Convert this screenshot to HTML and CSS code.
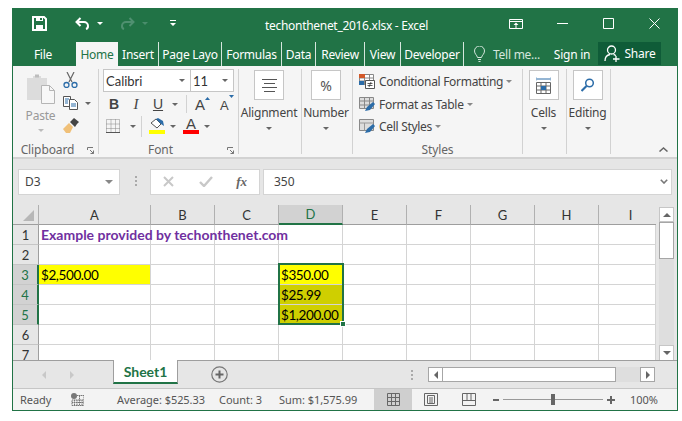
FILE: index.html
```html
<!DOCTYPE html>
<html lang="en">
<head>
  <meta charset="UTF-8">
  <title>techonthenet_2016.xlsx - Excel</title>
  <link rel="stylesheet" href="styles.css">
</head>
<body>
<div class="window">

  <!-- Title bar -->
  <header class="titlebar">
    <svg class="qa-save" width="15" height="15" viewBox="0 0 15 15"><path d="M1 1h11l2 2v11H1z" fill="none" stroke="#fff" stroke-width="2"/><path d="M4 1h7v4H4zM4 9h7v5H4z" fill="#fff"/><path d="M8 2h2v2H8z" fill="#217346"/></svg>
    <svg class="qa-undo" width="15" height="13" viewBox="0 0 15 13"><path d="M5.500 1 1.500 5l4 4M2 5h7a4 4 0 0 1 4 4 3 3 0 0 1-2 3" fill="none" stroke="#fff" stroke-width="2"/></svg>
    <span class="caret caret-white qa-c1"></span>
    <svg class="qa-redo" width="15" height="13" viewBox="0 0 15 13"><path d="M9.500 1l4 4-4 4M13 5H6a4 4 0 0 0-4 4 3 3 0 0 0 2 3" fill="none" stroke="#4f9070" stroke-width="2"/></svg>
    <span class="caret caret-dim qa-c2"></span>
    <svg class="qa-custom" width="6" height="7" viewBox="0 0 6 7"><path d="M0 0h6v1H0zM0 3h6L3 6z" fill="#fff"/></svg>
    <span class="doc-title">techonthenet_2016.xlsx - Excel</span>
    <svg class="win-display" width="14" height="11" viewBox="0 0 14 11"><path d="M.5 1.500h13v9H.5zM.5 3.500h13" fill="none" stroke="#fff"/><path d="M7 4.500 4.500 7h2v3h1V7h2z" fill="#fff"/></svg>
    <svg class="win-min" width="11" height="1" viewBox="0 0 11 1"><path d="M0 0h11v1H0z" fill="#fff"/></svg>
    <svg class="win-max" width="11" height="11" viewBox="0 0 11 11"><path d="M.5.500h10v10H.5z" fill="none" stroke="#fff"/></svg>
    <svg class="win-close" width="11" height="11" viewBox="0 0 11 11"><path d="M.5.500l10 10M10.500.500l-10 10" fill="none" stroke="#fff"/></svg>
  </header>

  <!-- Tabs -->
  <nav class="tabs">
    <span class="tab tab-file">File</span>
    <span class="tab tab-active">Home</span>
    <span class="tab tab-sep">Insert</span>
    <span class="tab tab-sep">Page Layo</span>
    <span class="tab tab-sep">Formulas</span>
    <span class="tab tab-sep">Data</span>
    <span class="tab tab-sep">Review</span>
    <span class="tab tab-sep">View</span>
    <span class="tab tab-sep">Developer</span>
    <span class="tab tab-tell"><svg width="11" height="16" viewBox="0 0 11 16"><path d="M3.500 11.500C3 9 .5 8 .5 5a5 5 0 0 1 10 0c0 3-2.500 4-3 6.500zM4 13.500h3M4.500 15.500h2" fill="none" stroke="#d5e6dd"/></svg>Tell me...</span>
    <span class="tab">Sign in</span>
    <span class="tab tab-share"><svg width="17" height="17" viewBox="0 0 17 17"><circle cx="7.500" cy="5" r="4" fill="none" stroke="#fff" stroke-width="1.300"/><path d="M1 16c0-4 2-6 5-6.500M9.500 9.500c1 .2 1.700.6 2.300 1.200M12 11v6M9 14h6.500" fill="none" stroke="#fff" stroke-width="1.300"/></svg>Share</span>
  </nav>

  <!-- Ribbon -->
  <section class="ribbon">
    <div class="group group-clipboard">
      <div class="group-body clip-body">
        <div class="paste">
          <svg width="29" height="30" viewBox="0 0 29 30"><path d="M1 4h6V2h8v2h6v22H1z" fill="#dcdcdc"/><path d="M9 .500h4v3H9z" fill="#bdbdbd"/><path d="M15.500 11.500h8l5 5v13h-13z" fill="#f7f7f7" stroke="#b5b5b5"/><path d="M23.500 11.500v5h5" fill="none" stroke="#b5b5b5"/></svg>
          <span class="paste-label">Paste</span>
          <span class="caret caret-pale"></span>
        </div>
        <div class="clip-tools">
          <svg width="15" height="16" viewBox="0 0 15 16"><path d="M4 0l5 10M11 0 6 10" fill="none" stroke="#666" stroke-width="1.200"/><circle cx="3.500" cy="13" r="2.500" fill="none" stroke="#2b6ca8" stroke-width="1.300"/><circle cx="11.500" cy="13" r="2.500" fill="none" stroke="#2b6ca8" stroke-width="1.300"/></svg>
          <div class="tool-row">
            <svg width="16" height="14" viewBox="0 0 16 14"><path d="M.500.500h7v10h-7z" fill="#fff" stroke="#555"/><path d="M6.500 3.500h5l3 3v7h-8z" fill="#fff" stroke="#555"/><path d="M2 3h4M2 5h3M2 7h3M8 8h5M8 10h5" stroke="#2b6ca8"/></svg>
            <span class="caret"></span>
          </div>
          <svg width="16" height="15" viewBox="0 0 16 15"><path d="M0 11 6 5l4 4-3 6H3z" fill="#f0c078"/><path d="M7 4l3-3 1-1 5 4-2 2-2 3z" fill="#444"/></svg>
        </div>
      </div>
      <div class="group-foot foot-left">Clipboard<svg class="launcher" width="7" height="7" viewBox="0 0 7 7"><path d="M.500 3V.500H6M3 3l3.500 3.500M6.500 3.500v3h-3" fill="none" stroke="#777"/></svg></div>
    </div>

    <div class="group group-font">
      <div class="group-body font-body">
        <div class="font-boxes">
          <span class="font-name">Calibri<span class="caret"></span></span>
          <span class="font-size">11<span class="caret"></span></span>
        </div>
        <div class="font-row row-style">
          <b class="btn btn-b">B</b>
          <i class="btn btn-i">I</i>
          <u class="btn btn-u">U</u>
          <span class="caret"></span>
          <span class="vsep vsep-a"></span>
          <span class="grow">A<svg width="5" height="3" viewBox="0 0 5 3"><path d="M0 3 2.500 0 5 3z" fill="#2b6ca8"/></svg></span>
          <span class="grow grow-small">A<svg width="5" height="3" viewBox="0 0 5 3"><path d="M0 0h5L2.500 3z" fill="#2b6ca8"/></svg></span>
        </div>
        <div class="font-row row-fill">
          <svg width="14" height="14" viewBox="0 0 14 14"><path d="M.500.500h13v13H.500zM.500 5h13M.500 9.500h13M5 .500v13M9.500.500v13" fill="none" stroke="#888" stroke-dasharray="1 1"/><path d="M0 13.500h14" stroke="#555"/></svg>
          <span class="caret caret-gap"></span>
          <span class="vsep vsep-b"></span>
          <span class="swatch-btn">
            <svg width="16" height="11" viewBox="0 0 16 11"><path d="M2 5l5-4 5 5-4 4z" fill="#fff" stroke="#555"/><path d="M7 1 9 0l5 3 1 5-3-2z" fill="#2b6ca8"/></svg>
            <span class="swatch swatch-yellow"></span>
          </span>
          <span class="caret"></span>
          <span class="swatch-btn swatch-btn-a">
            <span class="font-a">A</span>
            <span class="swatch swatch-red"></span>
          </span>
          <span class="caret"></span>
        </div>
      </div>
      <div class="group-foot foot-left">Font<svg class="launcher" width="7" height="7" viewBox="0 0 7 7"><path d="M.500 3V.500H6M3 3l3.500 3.500M6.500 3.500v3h-3" fill="none" stroke="#777"/></svg></div>
    </div>

    <div class="group group-align">
      <div class="big">
        <span class="big-box"><svg width="15" height="13" viewBox="0 0 15 13"><path d="M0 .500h15M2 4.500h11M0 8.500h15M2 12.500h11" stroke="#555"/></svg></span>
        <span class="big-label">Alignment</span>
        <span class="caret"></span>
      </div>
    </div>

    <div class="group group-number">
      <div class="big">
        <span class="big-box big-pct">%</span>
        <span class="big-label">Number</span>
        <span class="caret"></span>
      </div>
    </div>

    <div class="group group-styles">
      <div class="group-body styles-body">
        <div class="style-row">
          <svg width="16" height="15" viewBox="0 0 16 15"><path d="M.500.500h14v10H.500zM5.500.500v10M10.500.500v10M.500 4h14M.500 7h14" fill="#fff" stroke="#888"/><path d="M0 0h6v4H0z" fill="#d2592a"/><path d="M0 7h5v4H0z" fill="#2b6ca8"/><path d="M6.500 6.500h9v8h-9z" fill="#fff" stroke="#555"/><path d="M8.500 9.500h5M8.500 11.500h5M10 13l2-5" stroke="#333" stroke-width=".8"/></svg>
          Conditional Formatting<span class="caret"></span>
        </div>
        <div class="style-row">
          <svg width="16" height="15" viewBox="0 0 16 15"><path d="M.500.500h14v11H.500zM5.500.500v11M10.500.500v11M.500 4h14M.500 8h14" fill="#ddd" stroke="#888"/><path d="M6 14l2-4 6-5 2 2-5 6z" fill="#2b6ca8"/></svg>
          Format as Table<span class="caret"></span>
        </div>
        <div class="style-row">
          <svg width="16" height="15" viewBox="0 0 16 15"><path d="M.500.500h14v11H.500z" fill="#ddd" stroke="#888"/><path d="M.500 4h14M5.500 4v7.500" stroke="#999"/><path d="M6 14l2-4 6-5 2 2-5 6z" fill="#2b6ca8"/></svg>
          Cell Styles<span class="caret"></span>
        </div>
      </div>
      <div class="group-foot">Styles</div>
    </div>

    <div class="group group-cells">
      <div class="big">
        <span class="big-box"><svg width="15" height="17" viewBox="0 0 15 17"><path d="M0 .500v3M15 .500v3M1 2h13" stroke="#2b6ca8"/><path d="M.500 5.500h14v11H.500zM.500 9h14M.500 13h14M5 5.500v11M10 5.500v11" fill="#fff" stroke="#666"/><path d="M5 9h5v4H5z" fill="#2b6ca8"/></svg></span>
        <span class="big-label">Cells</span>
        <span class="caret"></span>
      </div>
    </div>

    <div class="group group-editing">
      <div class="big">
        <span class="big-box"><svg width="14" height="14" viewBox="0 0 14 14"><circle cx="8.500" cy="5" r="3.800" fill="none" stroke="#2b6ca8" stroke-width="1.500"/><path d="M5.500 8 .5 13" stroke="#2b6ca8" stroke-width="2.200"/></svg></span>
        <span class="big-label">Editing</span>
        <span class="caret"></span>
      </div>
    </div>

    <svg class="collapse" width="9" height="5" viewBox="0 0 9 5"><path d="M.500 4.500l4-3.500 4 3.500" fill="none" stroke="#666" stroke-width="1.500"/></svg>
  </section>

  <!-- Formula bar -->
  <section class="formula">
    <span class="namebox">D3<span class="caret caret-big"></span></span>
    <span class="grip"></span>
    <span class="fx-box">
      <svg width="12" height="11" viewBox="0 0 12 11"><path d="M1 1l9 9M10 1l-9 9" stroke="#c8c8c8" stroke-width="2"/></svg>
      <svg width="14" height="11" viewBox="0 0 14 11"><path d="M1 6l4 4 8-9" fill="none" stroke="#c8c8c8" stroke-width="2.400"/></svg>
      <i class="fx">fx</i>
    </span>
    <span class="formula-input">350<svg width="8" height="5" viewBox="0 0 8 5"><path d="M.800.800 4 4 7.200.800" fill="none" stroke="#777" stroke-width="1.600"/></svg></span>
  </section>

  <!-- Sheet -->
  <section class="sheet">
    <div class="grid-wrap">
      <table class="grid">
        <thead>
          <tr><th class="corner"><span class="corner-mark"></span></th><th>A</th><th>B</th><th>C</th><th class="hdr-sel">D</th><th>E</th><th>F</th><th>G</th><th>H</th><th class="col-last">I</th></tr>
        </thead>
        <tbody>
          <tr><th>1</th><td class="note">Example provided by techonthenet.com</td><td></td><td></td><td></td><td></td><td></td><td></td><td></td><td></td></tr>
          <tr><th>2</th><td></td><td></td><td></td><td></td><td></td><td></td><td></td><td></td><td></td></tr>
          <tr><th class="row-sel">3</th><td class="yellow">$2,500.00</td><td></td><td></td><td class="yellow">$350.00</td><td></td><td></td><td></td><td></td><td></td></tr>
          <tr><th class="row-sel">4</th><td></td><td></td><td></td><td class="tinted">$25.99</td><td></td><td></td><td></td><td></td><td></td></tr>
          <tr><th class="row-sel">5</th><td></td><td></td><td></td><td class="tinted">$1,200.00</td><td></td><td></td><td></td><td></td><td></td></tr>
          <tr><th>6</th><td></td><td></td><td></td><td></td><td></td><td></td><td></td><td></td><td></td></tr>
          <tr><th>7</th><td></td><td></td><td></td><td></td><td></td><td></td><td></td><td></td><td></td></tr>
        </tbody>
      </table>
      <div class="selection"><span class="handle"></span></div>
    </div>
    <div class="vscroll">
      <span class="sb-btn"><span class="tri tri-up"></span></span>
      <span class="sb-thumb"></span>
      <span class="sb-btn sb-down"><span class="tri tri-down"></span></span>
    </div>
  </section>

  <!-- Sheet tabs -->
  <section class="sheetbar">
    <span class="tri tri-left tri-pale nav-prev"></span>
    <span class="tri tri-right tri-pale nav-next"></span>
    <span class="sheet-tab">Sheet1</span>
    <svg class="add-sheet" width="17" height="17" viewBox="0 0 17 17"><circle cx="8.500" cy="8.500" r="7.700" fill="none" stroke="#777" stroke-width="1.200"/><path d="M8.500 4.500v8M4.500 8.500h8" stroke="#666" stroke-width="2"/></svg>
    <span class="grip grip-bar"></span>
    <div class="hscroll">
      <span class="hs-btn"><span class="tri tri-left"></span></span>
      <span class="hs-thumb"></span>
      <span class="hs-btn hs-end"><span class="tri tri-right"></span></span>
    </div>
  </section>

  <!-- Status bar -->
  <footer class="status">
    <span class="st-ready">Ready</span>
    <svg class="st-macro" width="13" height="13" viewBox="0 0 13 13"><circle cx="3" cy="3" r="3" fill="#777"/><path d="M6 2.500h7v10H1V7h12M1 9.500h12M3.500 7v5.500M6 7v5.500M8.500 2.500v10M11 7v5.500" fill="none" stroke="#777" stroke-dasharray="1.500 .5"/></svg>
    <span class="st-avg">Average: $525.33</span>
    <span class="st-count">Count: 3</span>
    <span class="st-sum">Sum: $1,575.99</span>
    <span class="view view-on"><svg width="13" height="13" viewBox="0 0 13 13"><path d="M.500.500h12v12H.500zM.500 4.500h12M.500 8.500h12M4.500.500v12M8.500.500v12" fill="none" stroke="#666"/></svg></span>
    <span class="view"><svg width="14" height="13" viewBox="0 0 14 13"><path d="M.500.500h13v12H.500z" fill="none" stroke="#666"/><path d="M3.500 2.500h7v8h-7z" fill="none" stroke="#666"/><path d="M5 5h4M5 7h4M5 9h4" stroke="#666"/></svg></span>
    <span class="view"><svg width="14" height="13" viewBox="0 0 14 13"><path d="M.500.500h13v12H.500zM.500 7.500h13M5 .500v7M9 .500v7" fill="none" stroke="#666"/></svg></span>
    <span class="zoom-minus"></span>
    <span class="slider"><span class="slider-thumb"></span></span>
    <span class="zoom-plus"></span>
    <span class="st-zoom">100%</span>
  </footer>
</div>
</body>
</html>
```

FILE: styles.css
```css
* {
  box-sizing: border-box;
}
body {
  margin: 0;
  padding: 8px 4px 0 12px;
  background: #fff;
  font-family: "Noto Sans", sans-serif;
  font-size: 12px;
  color: #444;
}
svg {
  display: block;
  flex: none;
}
.window {
  position: relative;
  width: 666px;
  height: 403px;
  border: 1px solid #217346;
  border-top: 0;
  background: #e6e6e6;
  overflow: hidden;
}

/* carets */
.caret {
  display: inline-block;
  flex: none;
  width: 0;
  height: 0;
  border-left: 3px solid transparent;
  border-right: 3px solid transparent;
  border-top: 3px solid #666;
}
.caret-white { border-top-color: #fff; }
.caret-dim { border-top-color: #4f9070; }
.caret-pale { border-top-color: #bbb; }
.caret-big {
  border-left-width: 4px;
  border-right-width: 4px;
  border-top-width: 4px;
  border-top-color: #888;
}

/* title bar */
.titlebar {
  display: flex;
  align-items: center;
  height: 34px;
  margin: 0 -1px;
  padding: 0 0 4px 20px;
  background: #217346;
  color: #fff;
}
.qa-undo { margin-left: 28px; }
.qa-c1 { margin-left: 7px; }
.qa-redo { margin-left: 17px; }
.qa-c2 { margin-left: 7px; opacity: .9; }
.qa-custom { margin-left: 22px; }
.doc-title {
  width: 150px;
  margin: 5px 0 0 89px;
  font-size: 12px;
  letter-spacing: -.3px;
  white-space: nowrap;
}
.win-display { margin-left: 94px; }
.win-min { margin-left: 34px; }
.win-max { margin-left: 35px; }
.win-close { margin-left: 35px; }

/* tabs */
.tabs {
  display: grid;
  grid-template-columns: 64px 42px 41px 63px 60px 34px 49px 36px 63px 82px 52px 63px;
  height: 24px;
  margin: 0 -1px;
  padding-left: 0;
  background: #217346;
  color: #fff;
}
.tab {
  display: flex;
  align-items: center;
  justify-content: center;
  font-size: 12px;
  letter-spacing: -.25px;
  white-space: nowrap;
}
.tab-file {
  padding-right: 2px;
}
.tab-active {
  background: #f5f5f5;
  color: #217346;
}
.tab-sep {
  border-right: 1px solid #d5e6dd;
}
.tab-tell {
  gap: 8px;
  padding-left: 4px;
  color: #d5e6dd;
}
.tab-share {
  gap: 4px;
  height: 23px;
  background: #0f5c38;
}

/* ribbon */
.ribbon {
  position: relative;
  display: flex;
  height: 93px;
  padding-top: 3px;
  background: #f5f5f5;
  border-bottom: 2px solid #d2d2d2;
}
.group {
  position: relative;
  display: flex;
  flex-direction: column;
  height: 85px;
  border-right: 1px solid #d2d2d2;
}
.group-clipboard { width: 86px; }
.group-font { width: 140px; }
.group-align { width: 63px; }
.group-number { width: 51px; }
.group-styles { width: 170px; }
.group-cells { width: 44px; }
.group-editing { width: 44px; }
.group-body {
  height: 69px;
}
.group-foot {
  display: flex;
  justify-content: center;
  height: 16px;
  font-size: 12px;
  line-height: 24px;
  letter-spacing: -.1px;
  color: #666;
}
.foot-left {
  padding-right: 16px;
}
.launcher {
  position: absolute;
  right: 4px;
  bottom: 0;
}

/* clipboard */
.clip-body {
  display: flex;
  padding: 5px 0 0 13px;
}
.paste {
  display: flex;
  flex-direction: column;
  align-items: center;
  width: 29px;
}
.paste-label {
  margin-top: 4px;
  line-height: 16px;
  letter-spacing: -.2px;
  color: #999;
}
.paste .caret {
  margin-top: 5px;
}
.clip-tools {
  display: flex;
  flex-direction: column;
  gap: 8px;
  margin-left: 8px;
  margin-top: -2px;
}
.tool-row {
  display: flex;
  align-items: center;
  gap: 6px;
}

/* font */
.font-body {
  padding-left: 4px;
}
.font-boxes {
  display: flex;
  height: 23px;
  font-family: Lato, sans-serif;
  font-size: 13px;
  color: #333;
}
.font-name,
.font-size {
  display: flex;
  align-items: center;
  justify-content: space-between;
  height: 23px;
  padding: 0 5px 0 2px;
  background: #fff;
  border: 1px solid #c6c6c6;
}
.font-name { width: 88px; }
.font-size { width: 43px; margin-left: 0; border-left: 0; }
.font-row {
  display: flex;
  align-items: center;
}
.row-style {
  height: 18px;
  margin-top: 3px;
}
.btn {
  display: flex;
  justify-content: center;
  width: 22px;
  font-family: "Liberation Sans", sans-serif;
  font-size: 14px;
  color: #444;
}
.row-style .caret { margin-left: 3px; }
.btn-i { font-family: "Liberation Serif", serif; font-size: 15px; }
.vsep {
  width: 1px;
  background: #d2d2d2;
  flex: none;
}
.vsep-a { height: 18px; margin-left: 8px; }
.grow {
  display: flex;
  align-items: flex-start;
  margin-left: 8px;
  font-family: "Liberation Sans", sans-serif;
  font-size: 15px;
  line-height: 17px;
}
.grow-small {
  margin-left: 10px;
  font-size: 13px;
  padding-top: 2px;
}
.grow svg { margin-top: 1px; }
.grow-small svg { margin-top: -2px; }
.row-fill {
  height: 20px;
  margin-top: 3px;
  padding-left: 3px;
}
.caret-gap { margin-left: 10px; }
.vsep-b { height: 21px; margin: 0 0 0 5px; }
.swatch-btn {
  display: flex;
  flex-direction: column;
  width: 16px;
  margin: 0 5px 0 7px;
}
.swatch-btn-a { margin-left: 7px; }
.swatch {
  height: 4px;
  margin-top: 1px;
}
.swatch-yellow { background: #ff0; }
.swatch-red { background: #f00; }
.font-a {
  font-family: "Liberation Sans", sans-serif;
  font-size: 15px;
  line-height: 11px;
  text-align: center;
}

/* big buttons */
.big {
  display: flex;
  flex-direction: column;
  align-items: center;
  padding: 1px 2px 0 0;
}
.big-box {
  display: flex;
  align-items: center;
  justify-content: center;
  width: 30px;
  height: 30px;
  background: #fff;
  border: 1px solid #c6c6c6;
}
.big-pct {
  font-size: 14px;
  color: #555;
}
.big-label {
  margin-top: 4px;
  line-height: 18px;
  letter-spacing: -.2px;
  white-space: nowrap;
}
.big .caret {
  margin-top: 5px;
}

/* styles */
.styles-body {
  display: flex;
  flex-direction: column;
  padding: 1px 0 0 6px;
}
.style-row {
  display: flex;
  align-items: center;
  gap: 4px;
  height: 23px;
  white-space: nowrap;
  letter-spacing: -.3px;
}
.style-row .caret {
  margin-left: -1px;
  border-top-color: #888;
}

.collapse {
  position: absolute;
  right: 9px;
  bottom: 5px;
}

/* formula bar */
.formula {
  display: flex;
  align-items: center;
  height: 46px;
  padding: 0 5px 1px 5px;
  background: #e6e6e6;
  font-size: 12px;
}
.namebox,
.fx-box,
.formula-input {
  display: flex;
  align-items: center;
  height: 26px;
  background: #fff;
  border: 1px solid #d4d4d4;
}
.namebox {
  justify-content: space-between;
  width: 102px;
  padding: 0 6px;
}
.grip {
  display: block;
  width: 2px;
  height: 11px;
  margin: 0 13px 0 15px;
  background: repeating-linear-gradient(#aaa 0 2px, transparent 2px 4px);
}
.fx-box {
  justify-content: space-between;
  width: 110px;
  padding: 0 12px;
  margin-right: 3px;
}
.fx {
  font-family: "Liberation Serif", serif;
  font-size: 13px;
  font-weight: bold;
  color: #666;
}
.formula-input {
  justify-content: space-between;
  flex: 1;
  padding: 0 3px 0 10px;
}

/* sheet */
.sheet {
  display: flex;
  height: 155px;
  background: #e6e6e6;
}
.grid-wrap {
  position: relative;
  width: 643px;
  height: 155px;
  overflow: hidden;
  background: #fff;
}
.grid {
  table-layout: fixed;
  width: 643px;
  border-collapse: separate;
  border-spacing: 0;
}
.grid th,
.grid td {
  height: 20px;
  padding: 0;
  font-weight: normal;
  overflow: visible;
  white-space: nowrap;
}
.grid thead th {
  width: 64px;
  height: 20px;
  background: #e6e6e6;
  border-right: 1px solid #b0b0b0;
  border-bottom: 1px solid #9e9e9e;
  font-family: Lato, sans-serif;
  font-size: 13px;
  color: #333;
}
.grid thead th:nth-child(2) { width: 112px; }
.grid thead th.corner {
  position: relative;
  width: 26px;
}
.grid thead th.col-last {
  width: 57px;
  padding-left: 6px;
  border-right: 0;
}
.corner-mark {
  position: absolute;
  right: 4px;
  bottom: 3px;
  border-left: 11px solid transparent;
  border-bottom: 11px solid #b7b7b7;
}
.grid thead th.hdr-sel {
  background: #d2d2d2;
  border-bottom: 2px solid #217346;
  color: #217346;
}
.grid tbody th {
  background: #e6e6e6;
  border-right: 1px solid #9e9e9e;
  border-bottom: 1px solid #c6c6c6;
  font-family: Lato, sans-serif;
  font-size: 13px;
  color: #333;
}
.grid tbody th.row-sel {
  background: #d2d2d2;
  border-right: 2px solid #217346;
  color: #217346;
}
.grid td {
  border-right: 1px solid #d4d4d4;
  border-bottom: 1px solid #d4d4d4;
  padding-left: 2px;
  font-family: Lato, sans-serif;
  font-size: 13.500px;
  letter-spacing: -.4px;
  color: #000;
}
.grid td.note {
  color: #7030a0;
  font-size: 14px;
  font-weight: bold;
  letter-spacing: 0;
}
.yellow {
  background: #ff0;
}
.tinted {
  background: #cfcf00;
}
.selection {
  position: absolute;
  left: 265px;
  top: 58px;
  width: 66px;
  height: 62px;
  border: 2px solid #217346;
}
.handle {
  position: absolute;
  right: -4px;
  bottom: -4px;
  width: 6px;
  height: 6px;
  background: #217346;
  border: 1px solid #fff;
}

/* vertical scrollbar */
.vscroll {
  display: flex;
  flex-direction: column;
  width: 15px;
  margin: 2px 0 0 3px;
  background: #dedede;
}
.sb-btn {
  display: flex;
  align-items: center;
  justify-content: center;
  height: 15px;
  background: #fff;
  border: 1px solid #c6c6c6;
}
.sb-down {
  margin-top: auto;
  border-bottom: 0;
}
.sb-thumb {
  height: 37px;
  background: #fff;
  border: 1px solid #a6a6a6;
}
.tri {
  display: block;
  width: 0;
  height: 0;
  border: 4px solid transparent;
}
.tri-up { border-top: 0; border-bottom-color: #666; }
.tri-down { border-bottom: 0; border-top-color: #666; }
.tri-left { border-left: 0; border-right-color: #666; }
.tri-right { border-right: 0; border-left-color: #666; }
.tri-pale.tri-left { border-right-color: #c8c8c8; }
.tri-pale.tri-right { border-left-color: #c8c8c8; }

/* sheet tabs */
.sheetbar {
  display: flex;
  align-items: flex-start;
  height: 28px;
  background: #e6e6e6;
  border-top: 1px solid #9e9e9e;
}
.nav-prev { margin: 10px 0 0 29px; }
.nav-next { margin: 10px 0 0 24px; }
.sheet-tab {
  width: 65px;
  height: 24px;
  margin: -1px 0 0 39px;
  background: #fff;
  border-left: 1px solid #9e9e9e;
  border-right: 1px solid #9e9e9e;
  border-bottom: 2px solid #217346;
  font-family: Lato, sans-serif;
  font-size: 14px;
  font-weight: bold;
  line-height: 24px;
  text-align: center;
  color: #217346;
}
.add-sheet {
  margin: 5px 0 0 33px;
}
.grip-bar {
  margin: 9px 15px 0 183px;
}
.hscroll {
  display: flex;
  width: 227px;
  height: 15px;
  margin: 6px 0 0 0;
  background: #dedede;
}
.hs-btn {
  display: flex;
  align-items: center;
  justify-content: center;
  width: 15px;
  background: #fff;
  border: 1px solid #a6a6a6;
}
.hs-thumb {
  width: 173px;
  background: #fff;
  border: 1px solid #a6a6a6;
  border-left: 0;
}
.hs-end {
  margin-left: auto;
}

/* status bar */
.status {
  display: flex;
  align-items: center;
  height: 22px;
  background: #f3f3f3;
  border-top: 1px solid #c6c6c6;
  font-size: 11px;
  letter-spacing: -.05px;
  color: #555;
}
.st-ready { margin-left: 7px; width: 51px; }
.st-avg { margin-left: 33px; width: 102px; white-space: nowrap; }
.st-count { width: 60px; white-space: nowrap; }
.st-sum { width: 95px; white-space: nowrap; }
.view {
  display: flex;
  align-items: center;
  justify-content: center;
  width: 38px;
  height: 21px;
}
.view-on {
  background: #cfcfcf;
}
.zoom-minus {
  width: 6px;
  height: 2px;
  margin-left: 5px;
  background: #666;
}
.slider {
  position: relative;
  width: 100px;
  height: 1px;
  margin-left: 4px;
  background: #999;
}
.slider-thumb {
  position: absolute;
  left: 48px;
  top: -5px;
  width: 4px;
  height: 11px;
  background: #666;
}
.zoom-plus {
  width: 8px;
  height: 8px;
  margin-left: 4px;
  background:
    linear-gradient(#666, #666) center / 8px 2px no-repeat,
    linear-gradient(#666, #666) center / 2px 8px no-repeat;
}
.st-zoom {
  margin-left: 15px;
}
```
